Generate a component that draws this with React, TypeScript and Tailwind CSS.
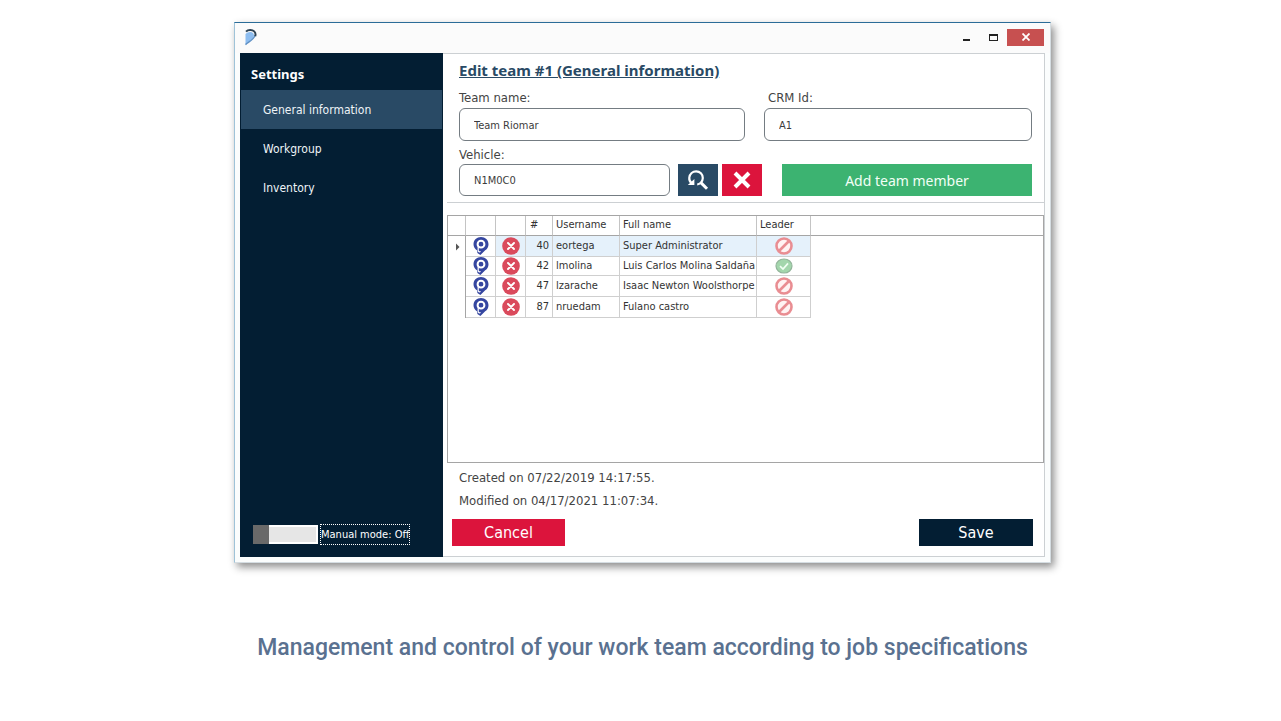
import { useState } from "react";

type Member = {
    id: number;
    username: string;
    fullName: string;
    leader: boolean;
};

const MEMBERS: Member[] = [
    { id: 40, username: "eortega", fullName: "Super Administrator", leader: false },
    { id: 42, username: "lmolina", fullName: "Luis Carlos Molina Saldaña", leader: true },
    { id: 47, username: "lzarache", fullName: "Isaac Newton Woolsthorpe", leader: false },
    { id: 87, username: "nruedam", fullName: "Fulano castro", leader: false },
];

const SECTIONS = ["General information", "Workgroup", "Inventory"];

const inputClass = "w-full rounded-md border border-[#747c82] bg-white px-[14px] pt-[2px] text-[11px] text-[#3c3c3c] outline-none";
const labelClass = "block text-[13px] leading-[19px] text-[#444]";

function LogoIcon() {
    return (
        <svg width="14" height="18" viewBox="0 0 14 18" aria-hidden="true">
            <path d="M1.5 6C3 4 6 3.4 8.2 4.4C10 5.4 10.4 7 9.6 9C8.4 11.8 4.5 13.5 1.5 16.5Z" fill="#8dbdf0" />
            <path d="M1.5 16.6C5 13.6 9.8 11.6 11 7.4" stroke="#5d8fc4" strokeWidth="1.4" fill="none" />
            <path d="M2 3.6C4 1.6 8.2 1.4 10.2 3.4C11.6 4.8 11.8 6.4 11.2 8.2" stroke="#2e4355" strokeWidth="2" fill="none" />
        </svg>
    );
}

function PinIcon() {
    return (
        <svg width="16" height="18" viewBox="0 0 16 18" className="block" aria-hidden="true">
            <path d="M8 0C3.8 0 .5 3 .5 7.2C.5 9.8 1.8 12 4.2 13.4L4.4 16L7.4 18L12.2 13.2C14.4 11.9 15.5 9.8 15.5 7.2C15.5 3 12.2 0 8 0Z" fill="#3546a0" />
            <path d="M5.2 9.4V13.2C5.2 14.6 6.6 15.6 7.4 14.2" stroke="#fff" strokeWidth="1.2" fill="none" />
            <circle cx="8" cy="7.2" r="3.4" fill="none" stroke="#fff" strokeWidth="2" />
        </svg>
    );
}

function RemoveIcon() {
    return (
        <svg width="18" height="18" viewBox="0 0 18 18" className="block" aria-hidden="true">
            <circle cx="9" cy="9" r="8.8" fill="#da4a5c" />
            <path d="M6 6L12 12M12 6L6 12" stroke="#fff" strokeWidth="1.9" strokeLinecap="round" />
        </svg>
    );
}

function LeaderIcon({ leader }: { leader: boolean }) {
    if (leader) {
        return (
            <svg width="18" height="18" viewBox="0 0 18 18" className="block" role="img" aria-label="Leader">
                <ellipse cx="9" cy="9" rx="8" ry="7" fill="#a3d6ac" stroke="#93b59b" strokeWidth="1.2" />
                <path d="M5 9.2L8 12L13 6.4" stroke="#f1fff3" strokeWidth="1.7" fill="none" />
            </svg>
        );
    }
    return (
        <svg width="18" height="18" viewBox="0 0 18 18" className="block" role="img" aria-label="Not leader">
            <circle cx="9" cy="9" r="7.5" fill="#fff3f3" stroke="#e98d92" strokeWidth="2.6" />
            <path d="M4 14L14 4" stroke="#e98d92" strokeWidth="2.6" />
        </svg>
    );
}

function TitleBar() {
    return (
        <header className="flex h-[30px] items-center justify-between bg-[#fbfbfb] pr-[6px] pb-[2px] pl-[9px]">
            <LogoIcon />
            <div className="flex items-center">
                <button aria-label="Minimize" className="flex h-[17px] w-[26px] items-center justify-center">
                    <svg width="8" height="10" viewBox="0 0 8 10"><path d="M1 8H8" stroke="#222" strokeWidth="2" /></svg>
                </button>
                <button aria-label="Maximize" className="flex h-[17px] w-[28px] items-center justify-center">
                    <svg width="9" height="7" viewBox="0 0 9 7">
                        <path d="M.5 0V7M8.5 0V7M0 6.5H9" stroke="#222" />
                        <path d="M0 1H9" stroke="#222" strokeWidth="2" />
                    </svg>
                </button>
                <button aria-label="Close" className="flex h-[17px] w-[37px] items-center justify-center bg-[#c75050]">
                    <svg width="8" height="8" viewBox="0 0 8 8"><path d="M.5 .5L7.5 7.5M7.5 .5L.5 7.5" stroke="#fff" strokeWidth="1.8" /></svg>
                </button>
            </div>
        </header>
    );
}

function Sidebar() {
    const [active, setActive] = useState(SECTIONS[0]);
    const [manual, setManual] = useState(false);

    return (
        <aside className="flex w-[203px] shrink-0 flex-col bg-[#031e33] px-px pt-[11px] pb-3 text-white">
            <h2 className="px-[10px] pb-[6px] font-['Noto_Sans','Open_Sans',sans-serif] text-[13px] leading-5 font-bold">Settings</h2>
            <nav className="flex flex-col">
                {SECTIONS.map(section => (
                    <button
                        key={section}
                        onClick={() => setActive(section)}
                        className={`h-[39px] pl-[22px] text-left text-[12px] text-[#eef3f7] ${section === active ? "bg-[#294a65]" : ""}`}
                    >
                        {section}
                    </button>
                ))}
            </nav>
            <label className="mt-auto flex items-center gap-[2px] pl-3 text-[11px]">
                <input type="checkbox" className="peer sr-only" checked={manual} onChange={e => setManual(e.target.checked)} />
                <span className={`flex h-[19px] w-[65px] ${manual ? "flex-row-reverse" : ""}`}>
                    <span className="w-4 bg-[#696969]" />
                    <span className="flex-1 border-2 border-l-0 border-white bg-[#e6e6e6]" />
                </span>
                <span className="border border-dotted border-white leading-[19px] whitespace-nowrap">Manual mode: {manual ? "On" : "Off"}</span>
            </label>
        </aside>
    );
}

function TeamForm() {
    return (
        <section className="border-b border-[#ccd0d3] pr-3 pb-[6px] pl-3">
            <h1 className="mb-2 font-['Noto_Sans','Open_Sans',sans-serif] text-[15px] leading-5 font-bold text-[#294a65] underline">
                Edit team #1 (General information)
            </h1>
            <div className="mb-1 flex gap-[19px]">
                <div className="flex-[286]">
                    <label htmlFor="team-name" className={labelClass}>Team name:</label>
                    <input id="team-name" defaultValue="Team Riomar" className={`${inputClass} mt-px h-[33px]`} />
                </div>
                <div className="flex-[268]">
                    <label htmlFor="crm-id" className={`${labelClass} pl-1`}>CRM Id:</label>
                    <input id="crm-id" defaultValue="A1" className={`${inputClass} mt-px h-[33px]`} />
                </div>
            </div>
            <label htmlFor="vehicle" className={labelClass}>Vehicle:</label>
            <div className="flex h-8">
                <input id="vehicle" defaultValue="N1M0C0" className={`${inputClass} min-w-0 flex-1`} />
                <button aria-label="Search vehicle" className="ml-2 flex w-10 items-center justify-center bg-[#294a65]">
                    <svg width="22" height="22" viewBox="0 0 22 22" fill="none" stroke="#fff">
                        <path d="M5 14.6C2.9 13 2 10.9 2.3 8.7C2.8 5 5.7 2.4 9.2 2.4C13 2.4 15.8 5.3 15.8 9C15.8 10.9 15.1 12.5 13.8 13.8C12.8 14.7 11.6 15.3 10.2 15.5" strokeWidth="2.2" />
                        <path d="M13.6 13.4L20 19.8" strokeWidth="3" />
                        <path d="M.8 16H7.4V10Z" fill="#fff" stroke="none" />
                    </svg>
                </button>
                <button aria-label="Clear vehicle" className="ml-1 flex w-10 items-center justify-center bg-[#dc143c]">
                    <svg width="18" height="18" viewBox="0 0 18 18"><path d="M2 2L16 16M16 2L2 16" stroke="#fff" strokeWidth="4" /></svg>
                </button>
                <button className="ml-5 w-[250px] bg-[#3cb371] font-['Noto_Sans','Open_Sans',sans-serif] text-[14px] text-[#f2fff6]">
                    Add team member
                </button>
            </div>
        </section>
    );
}

function MembersTable() {
    const head = "border-r border-b border-r-[#c4c4c4] border-b-[#a5a5a5] font-normal";
    const cell = "border-r border-b border-[#cfcfcf] p-0";

    return (
        <div className="mt-3 h-[248px] overflow-hidden border border-[#a5a5a5]">
            <table className="w-full table-fixed border-separate border-spacing-0 text-[11px] text-[#333]">
                <colgroup>
                    <col className="w-[18px]" />
                    <col className="w-[30px]" />
                    <col className="w-[30px]" />
                    <col className="w-[27px]" />
                    <col className="w-[67px]" />
                    <col className="w-[137px]" />
                    <col className="w-[54px]" />
                    <col />
                </colgroup>
                <thead>
                    <tr className="h-5 text-left">
                        <th className={head} />
                        <th className={head} />
                        <th className={head} />
                        <th className={`${head} pl-1`}>#</th>
                        <th className={`${head} pl-[3px]`}>Username</th>
                        <th className={`${head} pl-[3px]`}>Full name</th>
                        <th className={`${head} pl-[3px]`}>Leader</th>
                        <th className="border-b border-[#a5a5a5]" />
                    </tr>
                </thead>
                <tbody>
                    {MEMBERS.map((m, i) => {
                        // the second row is a little shorter than the others
                        const box = i === 1 ? "flex h-[18px] items-center" : "flex h-5 items-center";
                        const tint = i === 0 ? "bg-[#e5f1fb]" : "";
                        return (
                            <tr key={m.id} className="leading-4 whitespace-nowrap">
                                <td className="border-r border-[#a5a5a5] p-0">
                                    {i === 0 && (
                                        <svg width="4" height="8" viewBox="0 0 4 8" className="ml-2"><path d="M0 .5L3.5 4L0 7.5Z" fill="#555" /></svg>
                                    )}
                                </td>
                                <td className={cell}>
                                    <button aria-label={`Locate ${m.username}`} className={`${box} w-full justify-center`}><PinIcon /></button>
                                </td>
                                <td className={`${cell} ${tint}`}>
                                    <button aria-label={`Remove ${m.username}`} className={`${box} w-full justify-center`}><RemoveIcon /></button>
                                </td>
                                <td className={`${cell} ${tint}`}><div className={`${box} justify-end pr-[3px]`}>{m.id}</div></td>
                                <td className={`${cell} ${tint}`}><div className={`${box} pl-[3px]`}>{m.username}</div></td>
                                <td className={`${cell} ${tint}`}><div className={`${box} pl-[3px]`}>{m.fullName}</div></td>
                                <td className={`${cell} ${tint}`}><div className={`${box} justify-center`}><LeaderIcon leader={m.leader} /></div></td>
                                <td className="p-0" />
                            </tr>
                        );
                    })}
                </tbody>
            </table>
        </div>
    );
}

export default function App() {
    return (
        <main className="flex min-h-screen flex-col items-center bg-white pt-[22px] pl-1 font-['DejaVu_Sans_Condensed','Noto_Sans',sans-serif]">
            <div className="w-full max-w-[817px] border border-t-[#2b6c98] border-r-[#d5dde2] border-b-[#d5dde2] border-l-[#9fc3d8] bg-[#fbfdfd] shadow-[3px_4px_8px_rgba(0,0,0,0.45)]">
                <TitleBar />
                <div className="mx-[5px] mb-[5px] flex">
                    <Sidebar />
                    <div className="min-w-0 flex-1 border border-l-0 border-[#ccd0d3] bg-white pt-[6px] pb-[10px] pl-1">
                        <TeamForm />
                        <MembersTable />
                        <div className="px-3 pt-[3px] text-[13px] leading-[23px] text-[#444]">
                            <p>Created on 07/22/2019 14:17:55.</p>
                            <p>Modified on 04/17/2021 11:07:34.</p>
                        </div>
                        <div className="mt-[7px] flex justify-between pr-[11px] pl-[5px] text-[16px] text-white">
                            <button className="h-[27px] w-[113px] bg-[#dc143c]">Cancel</button>
                            <button className="h-[27px] w-[114px] bg-[#031e33]">Save</button>
                        </div>
                    </div>
                </div>
            </div>
            <p className="mt-[67px] font-['Roboto','Noto_Sans',sans-serif] text-[23px] leading-9 font-medium text-[#5a7190]">
                Management and control of your work team according to job specifications
            </p>
        </main>
    );
}
